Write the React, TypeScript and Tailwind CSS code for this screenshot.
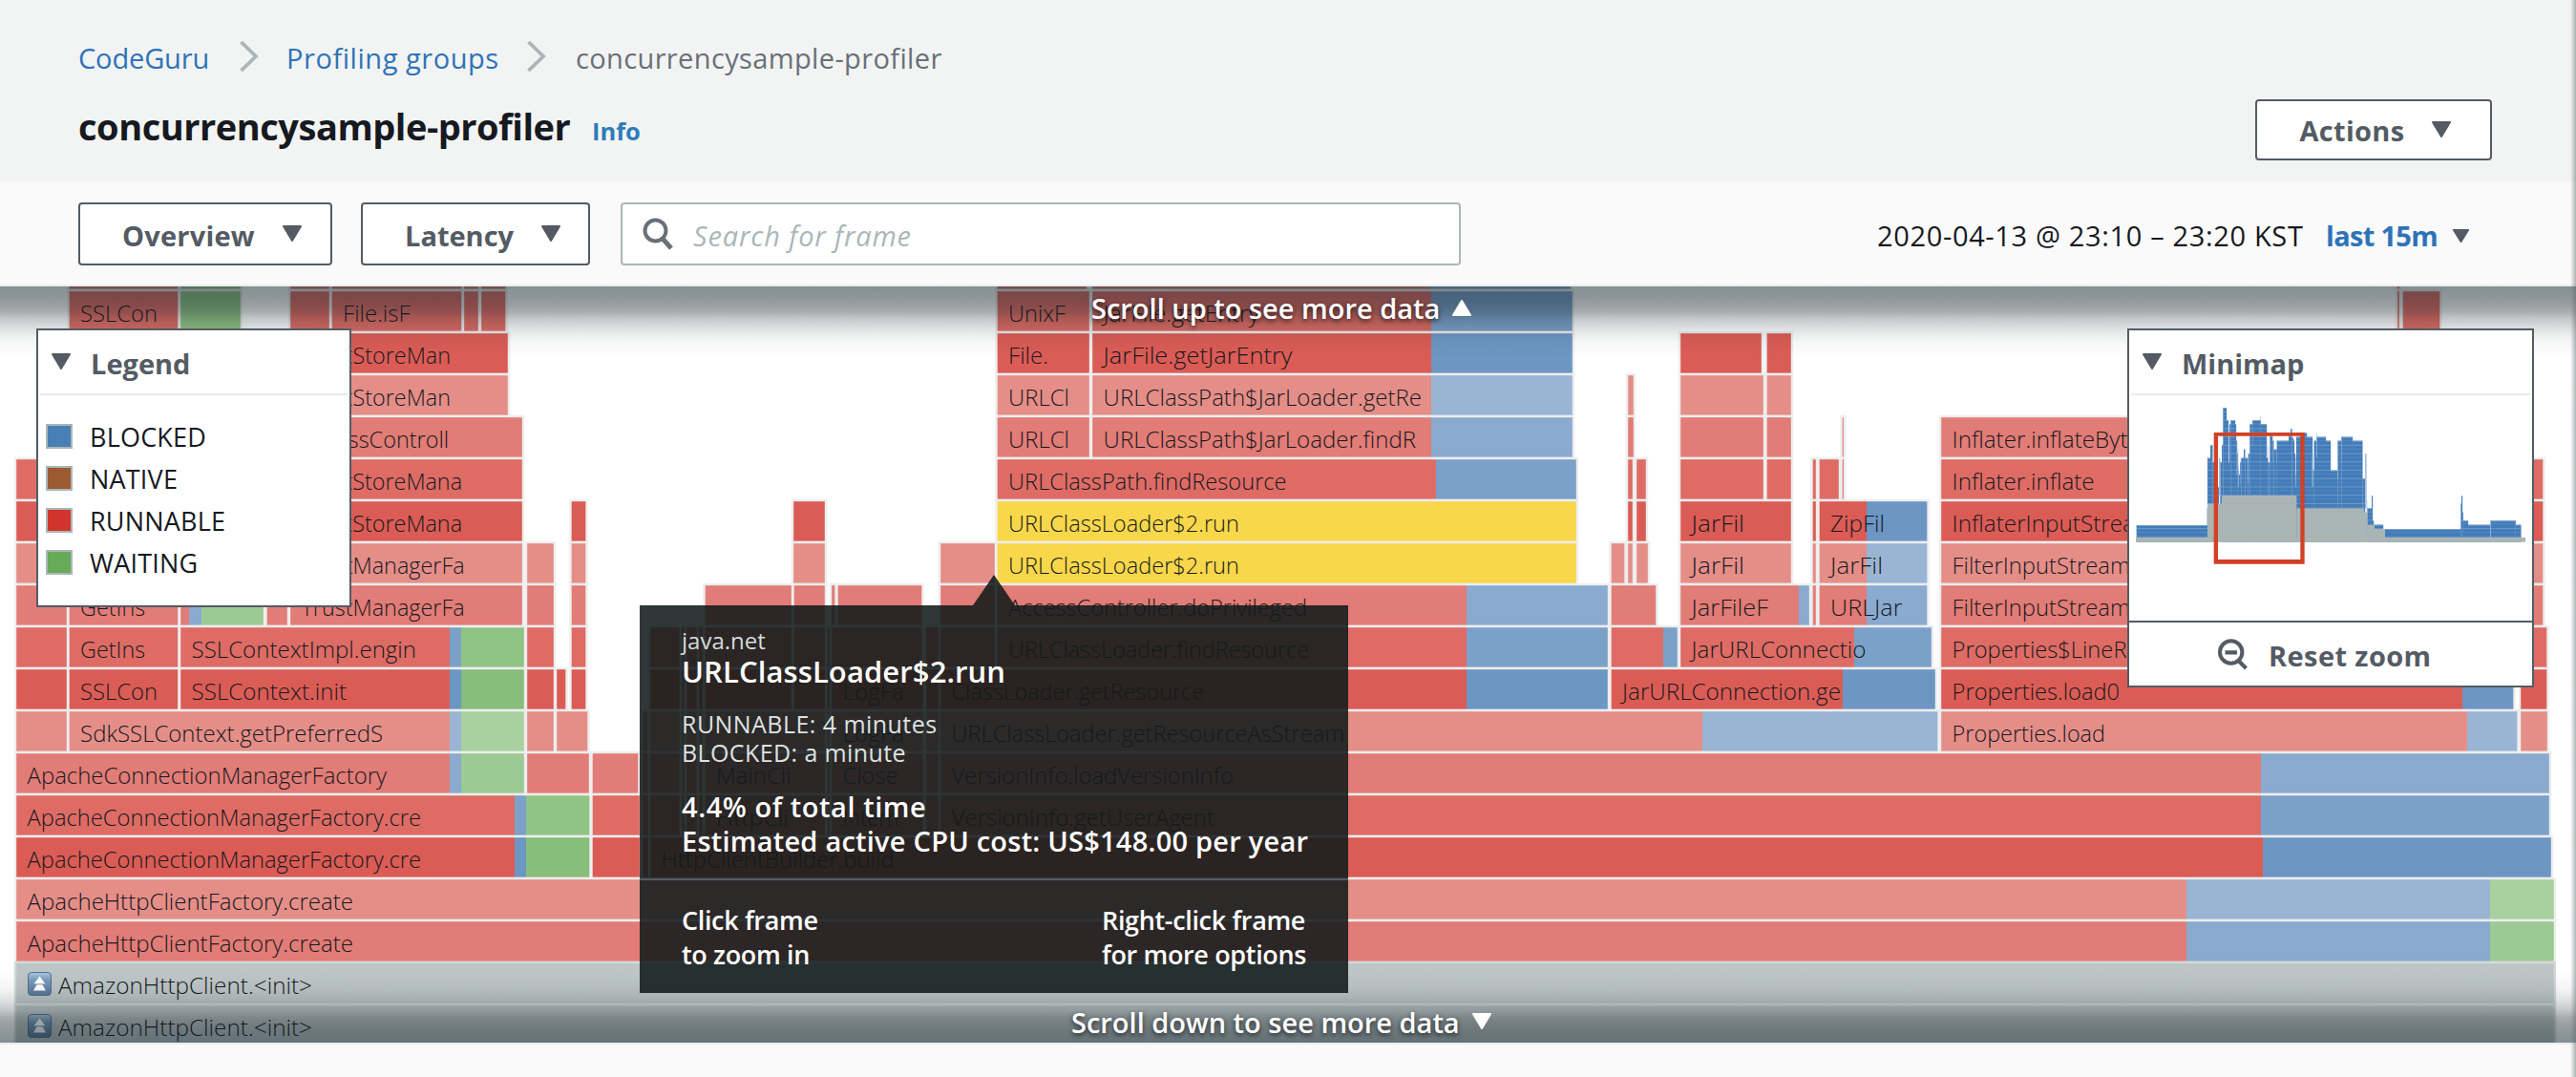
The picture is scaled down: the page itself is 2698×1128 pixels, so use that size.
import type { ReactNode } from 'react';

/* ---------- Flame graph data ---------- */

// Background tones repeat every four rows.
const RED = ['#db5c55', '#e58e88', '#e27c76', '#de6c65'];
const BLUE = ['#6c96c3', '#9ab5d4', '#8aaacf', '#7ba1c9'];
const GREEN = ['#87be7b', '#a9d19f', '#9cca93', '#90c485'];
const YELLOW = '#f9d74a';
const GRAY = '#bdc5c6';

type Frame = {
  x: number;
  end: number;
  label?: string;
  labelEnd?: number;
  blue?: number;
  green?: number;
  kind?: 'yellow' | 'gray';
};
type Row = { top: number; frames: Frame[] };

const f = (x: number, end: number, label?: string, labelEnd?: number, extra: Partial<Frame> = {}): Frame => ({
  x,
  end,
  label,
  labelEnd,
  ...extra,
});

const ROWS: Row[] = [
  {
    top: 260,
    frames: [
      f(71.5, 187.5), f(188, 253, undefined, undefined, { green: 188 }), f(303, 346), f(346.5, 484.5), f(485, 502), f(503, 530.5),
      f(1043.5, 1139), f(1143, 1646, undefined, undefined, { blue: 1497 }), f(2510, 2514),
    ],
  },
  {
    top: 304,
    frames: [
      f(71.5, 187.5, 'SSLCon', 165), f(188, 253, undefined, undefined, { green: 188 }), f(303, 346), f(346.5, 484.5, 'File.isF', 429.5),
      f(485, 502), f(503, 530.5),
      f(1043.5, 1142, 'UnixF', 1116), f(1143, 1648, 'JarFile.getEntry', 1319, { blue: 1499 }),
      f(2510, 2514), f(2515.5, 2556.5),
    ],
  },
  {
    top: 348,
    frames: [
      f(303, 533, 'TrustStoreMan', 472),
      f(1043.5, 1142, 'File.', 1098), f(1143, 1648, 'JarFile.getJarEntry', 1353.5, { blue: 1499 }),
      f(1759, 1846), f(1849.5, 1877),
    ],
  },
  {
    top: 392,
    frames: [
      f(303, 533, 'TrustStoreMan', 472),
      f(1043.5, 1142, 'URLCl', 1120), f(1143, 1648, 'URLClassPath$JarLoader.getRe', 1489, { blue: 1499 }),
      f(1704, 1712), f(1759, 1848), f(1849.5, 1877),
    ],
  },
  {
    top: 436,
    frames: [
      f(303, 548, 'AccessControll', 470),
      f(1043.5, 1142, 'URLCl', 1120), f(1143, 1648, 'URLClassPath$JarLoader.findR', 1483, { blue: 1499 }),
      f(1704, 1712), f(1759, 1848), f(1849.5, 1877), f(1928.5, 1932),
      f(2032, 2632, 'Inflater.inflateByt', 2228.5),
    ],
  },
  {
    top: 480,
    frames: [
      f(16, 71), f(303, 548, 'TrustStoreMana', 484),
      f(1043.5, 1652, 'URLClassPath.findResource', 1347.6, { blue: 1504 }),
      f(1704, 1711), f(1713, 1725), f(1759, 1848), f(1849.5, 1877), f(1897.5, 1903), f(1904.5, 1927), f(1928.5, 1932),
      f(2032, 2632, 'Inflater.inflate', 2193.6), f(2639, 2664.5),
    ],
  },
  {
    top: 524,
    frames: [
      f(16, 71), f(303, 548, 'TrustStoreMana', 484), f(597.5, 614.5), f(830, 865),
      f(1043.5, 1652, 'URLClassLoader$2.run', 1298, { kind: 'yellow' }),
      f(1704, 1711), f(1713, 1725), f(1759, 1877, 'JarFil', 1827), f(1897.5, 1903),
      f(1904.5, 2019.5, 'ZipFil', 1974, { blue: 1955 }),
      f(2032, 2632, 'InflaterInputStrea', 2236), f(2639, 2664.5),
    ],
  },
  {
    top: 568,
    frames: [
      f(16, 71), f(303, 548, 'TrustManagerFa', 486.6), f(551, 581), f(597.5, 614.5), f(830, 865), f(984, 1043),
      f(1043.5, 1652, 'URLClassLoader$2.run', 1298, { kind: 'yellow' }),
      f(1686.5, 1702.5), f(1704, 1711), f(1713, 1727), f(1759, 1877, 'JarFil', 1827), f(1897.5, 1903),
      f(1904.5, 2019.5, 'JarFil', 1972, { blue: 1955 }),
      f(2032, 2632, 'FilterInputStream', 2231), f(2639, 2664.5),
    ],
  },
  {
    top: 612,
    frames: [
      f(16, 71), f(71.5, 187.5, 'GetIns', 152), f(188, 277, undefined, undefined, { blue: 198, green: 211 }), f(278.5, 302),
      f(303, 548, 'TrustManagerFa', 486.6), f(551, 581), f(597.5, 614.5),
      f(737.5, 830), f(830.5, 865), f(870, 875.5), f(876.5, 966.5), f(984, 1043),
      f(1043.5, 1685, 'AccessController.doPrivileged', 1369, { blue: 1536 }),
      f(1686.5, 1735.5, undefined, undefined, { blue: 1734 }), f(1759, 1896, 'JarFileF', 1852, { blue: 1884 }), f(1897.5, 1903),
      f(1904.5, 2019.5, 'URLJar', 1992.5, { blue: 1955 }),
      f(2032, 2632, 'FilterInputStream', 2231), f(2639, 2664.5),
    ],
  },
  {
    top: 656,
    frames: [
      f(16, 71), f(71.5, 187.5, 'GetIns', 152), f(188, 550, 'SSLContextImpl.engin', 436, { blue: 471, green: 483 }),
      f(551, 581), f(597.5, 614.5),
      f(680, 713), f(713, 718), f(718, 731), f(731, 737), f(737.5, 830), f(830.5, 865), f(865.5, 870), f(870, 966.5),
      f(969, 984), f(984, 1043), f(1043.5, 1685, 'URLClassLoader.findResource', 1371, { blue: 1536 }),
      f(1686.5, 1758, undefined, undefined, { blue: 1742 }), f(1759, 2024, 'JarURLConnectio', 1954.5, { blue: 1942 }),
      f(2032, 2632, 'Properties$LineR', 2227.5), f(2639, 2668.5),
    ],
  },
  {
    top: 700,
    frames: [
      f(16, 71), f(71.5, 187.5, 'SSLCon', 165), f(188, 550, 'SSLContext.init', 363, { blue: 471, green: 483 }),
      f(551, 581), f(582, 593.5), f(597.5, 614.5),
      f(680, 713), f(713, 718), f(718, 731), f(731, 737), f(737.5, 830), f(830.5, 865), f(865.5, 870), f(870, 968, 'LogFa', 947),
      f(969, 984), f(984, 1685, 'ClassLoader.getResource', 1261, { blue: 1536 }),
      f(1686.5, 2028, 'JarURLConnection.ge', 1928, { blue: 1930 }),
      f(2032, 2633.5, 'Properties.load0', 2220, { blue: 2579 }), f(2639, 2668.5),
    ],
  },
  {
    top: 744,
    frames: [
      f(16, 71), f(71.5, 550, 'SdkSSLContext.getPreferredS', 401, { blue: 471, green: 483 }), f(551, 581), f(582, 616.5),
      f(672, 680), f(680, 713), f(713, 718), f(718, 731), f(731, 737), f(737.5, 865), f(865.5, 870), f(870, 968, 'LogFa', 947),
      f(969, 984), f(984, 2030.5, 'URLClassLoader.getResourceAsStream', 1408, { blue: 1783 }),
      f(2032, 2637.5, 'Properties.load', 2205, { blue: 2584 }), f(2639, 2669),
    ],
  },
  {
    top: 788,
    frames: [
      f(16, 550, 'ApacheConnectionManagerFactory', 405, { blue: 471, green: 483 }), f(551, 618), f(619.5, 669.5),
      f(672, 680), f(680, 713), f(713, 718), f(718, 731), f(731, 737), f(737.5, 865, 'MainCli', 828.6), f(865.5, 870),
      f(870, 968, 'Close', 940.5), f(969, 984), f(984, 2671, 'VersionInfo.loadVersionInfo', 1292, { blue: 2368 }),
    ],
  },
  {
    top: 832,
    frames: [
      f(16, 618.5, 'ApacheConnectionManagerFactory.cre', 441, { blue: 539, green: 551 }), f(619.5, 671),
      f(672, 680), f(680, 713), f(713, 718), f(718, 731), f(731, 737), f(737.5, 865, 'HttpCli', 826), f(865.5, 870),
      f(870, 968, 'Intern', 941.5), f(969, 984), f(984, 2671, 'VersionInfo.getUserAgent', 1272, { blue: 2368 }),
    ],
  },
  {
    top: 876,
    frames: [
      f(16, 618.5, 'ApacheConnectionManagerFactory.cre', 441, { blue: 539, green: 551 }), f(619.5, 671), f(672, 680),
      f(680, 2673, 'HttpClientBuilder.build', 936.6, { blue: 2370 }),
    ],
  },
  { top: 920, frames: [f(16, 2676, 'ApacheHttpClientFactory.create', 370, { blue: 2290, green: 2608 })] },
  { top: 964, frames: [f(16, 2676, 'ApacheHttpClientFactory.create', 370, { blue: 2290, green: 2608 })] },
  { top: 1008, frames: [f(16, 2676, 'AmazonHttpClient.<init>', 327, { kind: 'gray' })] },
  { top: 1052, frames: [f(16, 2676, 'AmazonHttpClient.<init>', 327, { kind: 'gray' })] },
];

function FrameShape({ frame, top }: { frame: Frame; top: number }) {
  const tone = (((top - 348) / 44) % 4 + 4) % 4;
  const base = frame.kind === 'yellow' ? YELLOW : frame.kind === 'gray' ? GRAY : RED[tone];
  const isGray = frame.kind === 'gray';
  const labelX = frame.x + (isGray ? 45 : 12.6);
  return (
    <g>
      <rect x={frame.x} y={top} width={frame.end - frame.x} height={44} fill={base} />
      {frame.blue !== undefined && (
        <rect x={frame.blue} y={top} width={frame.end - frame.blue} height={44} fill={BLUE[tone]} />
      )}
      {frame.green !== undefined && (
        <rect x={frame.green} y={top} width={frame.end - frame.green} height={44} fill={GREEN[tone]} />
      )}
      <rect
        x={frame.x}
        y={top}
        width={frame.end - frame.x}
        height={44}
        fill="none"
        stroke={isGray ? '#d3dada' : '#eeeeee'}
        strokeWidth={2.4}
      />
      {isGray && <UpBadge x={29} y={top + 10} />}
      {frame.label && (
        <text
          x={labelX}
          y={top + 33}
          textLength={(frame.labelEnd ?? frame.end) - labelX}
          lengthAdjust="spacingAndGlyphs"
          fontSize={24.5}
          fill="#16191f"
        >
          {frame.label}
        </text>
      )}
    </g>
  );
}

function UpBadge({ x, y }: { x: number; y: number }) {
  return (
    <g transform={`translate(${x} ${y})`}>
      <rect x={0.5} y={0.5} width={24} height={24} rx={3.5} fill="url(#badge)" stroke="#55718f" />
      <path d="M12.500 4.500 18.500 12.500H15L19 19.500H6L10 12.500H6.500Z" fill="#ffffff" />
      <path d="M8.500 12.800H16.500" stroke="#7d9dbd" strokeWidth={1} />
    </g>
  );
}

function FlameGraph() {
  return (
    <svg
      className="block h-[792px] w-[2698px] font-light"
      viewBox="0 300 2698 792"
      fontFamily='"Open Sans", "Noto Sans", sans-serif'
    >
      <defs>
        <linearGradient id="badge" x1="0" y1="0" x2="0" y2="1">
          <stop offset="0" stopColor="#a9c6e0" />
          <stop offset="0.35" stopColor="#7799bb" />
          <stop offset="1" stopColor="#56779b" />
        </linearGradient>
      </defs>
      {ROWS.map((row) => row.frames.map((frame, i) => <FrameShape key={`${row.top}-${i}`} frame={frame} top={row.top} />))}
    </svg>
  );
}

/* ---------- Minimap ---------- */

// [left, right, top]
const MINI_BLUE: [number, number, number][] = [
  [53, 276, 420], [276, 285, 209], [285, 292, 169], [292, 297, 222], [297, 312, 300], [316, 321, 222], [321, 325, 169],
  [325, 336, 51], [336, 342, 90], [345, 349, 103], [342, 345, 222], [349, 363, 90], [363, 366, 103], [366, 369, 155],
  [369, 371, 195], [371, 375, 248], [375, 378, 261], [378, 382, 222], [382, 390, 209], [390, 394, 182], [394, 403, 209],
  [403, 405, 222], [405, 409, 195], [409, 417, 103], [417, 443, 90], [443, 462, 103], [462, 466, 209], [466, 472, 222],
  [472, 480, 130], [480, 484, 155], [484, 494, 182], [494, 531, 155], [531, 537, 130], [537, 541, 117], [541, 546, 145],
  [546, 549, 155], [549, 552, 195], [552, 555, 261], [555, 567, 143], [567, 588, 130], [588, 606, 143], [606, 611, 248],
  [611, 618, 155], [618, 621, 143], [621, 648, 143], [648, 663, 155], [663, 685, 248], [685, 697, 155], [697, 732, 143],
  [732, 763, 155], [763, 771, 274], [778, 792, 367], [792, 795, 327], [795, 798, 405], [798, 828, 419], [828, 1072, 432],
  [1072, 1074, 352], [1074, 1077, 327], [1077, 1079, 380], [1079, 1095, 406], [1095, 1165, 419], [1165, 1244, 406],
  [1244, 1261, 419],
];
const MINI_LIGHT: [number, number, number, number][] = [
  [312, 316, 209, 327], [442, 444, 78, 92], [371, 373, 182, 262], [771, 776, 195, 367], [776, 778, 340, 380],
  [342, 344, 143, 222], [366, 367, 155, 262], [373, 375, 235, 300], [403, 405, 195, 288], [417, 418, 90, 170], [465, 467, 169, 222],
  [471, 472, 143, 235], [481, 482, 143, 222], [494, 495, 155, 222], [552, 554, 209, 300], [605, 608, 195, 300], [618, 620, 130, 209],
  [685, 687, 155, 275], [697, 698, 155, 222], [378, 379, 209, 290], [1164, 1166, 406, 458], [274, 276, 366, 419],
];
const MINI_GRAY: [number, number, number][] = [
  [276, 321, 353], [321, 556, 327], [556, 768, 367], [768, 778, 380], [778, 801, 419], [801, 834, 432], [51, 1275, 459],
];

function MinimapChart() {
  return (
    <svg className="block h-[236px] w-[422px]" viewBox="30 12 1266 708">
      <defs>
        <pattern id="mini-lines" x="0" y="51" width="1266" height="26.200" patternUnits="userSpaceOnUse">
          <rect x="0" y="12" width="1400" height="2.500" fill="#8db0d3" fillOpacity="0.700" />
          <rect x="0" y="24" width="1400" height="2" fill="#8db0d3" fillOpacity="0.300" />
        </pattern>
      </defs>
      {MINI_BLUE.map(([l, r, t]) => (
        <g key={l}>
          <rect x={l} y={t} width={r - l + 0.5} height={473 - t} fill="#437cb9" />
          <rect x={l} y={t} width={r - l} height={2.5} fill="#7fa6cf" />
          <rect x={l} y={t} width={r - l + 0.5} height={460 - t} fill="url(#mini-lines)" />
        </g>
      ))}
      {MINI_LIGHT.map(([l, r, t, b], i) => (
        <rect key={i} x={l} y={t} width={r - l} height={b - t} fill="#a3bfdb" />
      ))}
      {MINI_GRAY.map(([l, r, t]) => (
        <g key={l}>
          <rect x={l} y={t} width={r - l} height={473 - t} fill="#aab5b4" />
          <rect x={l} y={t} width={r - l} height={460 - t} fill="url(#mini-lines)" opacity={0.35} />
        </g>
      ))}
      <path d="M296 129H581V542H296ZM309 140V528H568V140Z" fillRule="evenodd" fill="#d14126" />
    </svg>
  );
}

/* ---------- Small shared pieces ---------- */

function Caret({ className, up = false }: { className: string; up?: boolean }) {
  return (
    <svg viewBox="0 0 22 18" preserveAspectRatio="none" className={className}>
      <path
        d={up ? 'M2 17H20L11 2Z' : 'M2 1H20L11 16Z'}
        fill="currentColor"
        stroke="currentColor"
        strokeWidth={2}
        strokeLinejoin="round"
      />
    </svg>
  );
}

function Chevron() {
  return (
    <svg viewBox="0 0 20 32" className="h-8 w-5 shrink-0" fill="none" stroke="#aab7b8" strokeWidth={3.8}>
      <path d="M1.500 1 17 16 1.500 31" />
    </svg>
  );
}

function PanelHeader({ children }: { children: ReactNode }) {
  return (
    <div className="mx-[2px] flex h-[68px] items-center border-b-2 border-[#eaeded] pl-[11px] text-[#545b64]">
      <Caret className="h-[18px] w-[22px]" />
      <span className="mt-[2px] ml-[20px] text-[29px] leading-none font-bold">{children}</span>
    </div>
  );
}

function LegendItem({ swatch, children }: { swatch: string; children: ReactNode }) {
  return (
    <li className="flex h-11 items-center">
      <span className={`h-[26px] w-7 border-2 border-[#aab7b8] ${swatch}`} />
      <span className="ml-[18px] text-[27px] leading-none tracking-[0.2px] text-[#16191f]">{children}</span>
    </li>
  );
}

/* ---------- Page sections ---------- */

function Header() {
  return (
    <header className="h-[190px] bg-[#f2f4f3] pt-[41px] pr-[88px] pl-[82px]">
      <nav className="flex h-10 items-center text-[29px] leading-10">
        <a className="w-[138px] tracking-[-0.15px] whitespace-nowrap text-[#2e73b8]">CodeGuru</a>
        <span className="ml-[31px] flex -translate-y-[2px]"><Chevron /></span>
        <a className="ml-[29px] w-[223px] tracking-[0.550px] whitespace-nowrap text-[#2e73b8]">Profiling groups</a>
        <span className="ml-[29px] flex -translate-y-[2px]"><Chevron /></span>
        <span className="ml-[31px] tracking-[0.370px] whitespace-nowrap text-[#687078]">concurrencysample-profiler</span>
      </nav>
      <div className="mt-[23px] flex h-16 items-start justify-between">
        <div className="flex h-16 items-baseline">
          <h1 className="w-[516px] text-[38px] leading-[56px] font-bold tracking-[-0.470px] whitespace-nowrap text-[#16191f]">
            concurrencysample-profiler
          </h1>
          <a className="ml-[22px] text-[25.500px] font-bold text-[#2e7cb8]">Info</a>
        </div>
        <button className="flex h-16 w-[248px] items-center rounded border-2 border-[#545b64] bg-white pl-[43px] text-[29px] font-bold text-[#545b64]">
          <span className="w-[113px] leading-none tracking-[0.300px] whitespace-nowrap">Actions</span>
          <Caret className="ml-[26px] h-[18px] w-[22px]" />
        </button>
      </div>
    </header>
  );
}

function Toolbar() {
  return (
    <div className="flex h-[110px] items-start border-b-2 border-[#eaeded] bg-[#fafafa] pt-[22px] pl-[82px]">
      <button className="flex h-[66px] w-[266px] items-center rounded border-2 border-[#545b64] bg-white pl-[44px] text-[29px] font-bold text-[#545b64]">
        <span className="mt-[2px] w-[136px] leading-none tracking-[0.200px] whitespace-nowrap">Overview</span>
        <Caret className="ml-[31px] h-[18px] w-[22px]" />
      </button>
      <button className="ml-[30px] flex h-[66px] w-[240px] items-center rounded border-2 border-[#545b64] bg-white pl-[44px] text-[29px] font-bold text-[#545b64]">
        <span className="mt-[2px] w-[112px] leading-none whitespace-nowrap">Latency</span>
        <Caret className="ml-[30px] h-[18px] w-[22px]" />
      </button>
      <div className="ml-[32px] flex h-[66px] w-[880px] items-center rounded border-2 border-[#aab7b8] bg-white pl-[21px]">
        <svg viewBox="0 0 32 34" className="h-[34px] w-8" fill="none" stroke="#687078" strokeWidth={4}>
          <circle cx="13.500" cy="13.500" r="11" />
          <path d="M21 22 30 32" strokeWidth={5} />
        </svg>
        <span className="mt-[2px] ml-[21px] text-[29px] leading-none tracking-[0.850px] text-[#aab7b8] italic">Search for frame</span>
      </div>
      <div className="ml-[436px] flex h-[66px] items-center text-[29px] leading-none">
        <span className="mt-[2px] w-[446px] tracking-[0.650px] whitespace-nowrap text-[#16191f]">
          2020-04-13 @ 23:10 – 23:20 KST
        </span>
        <span className="mt-[2px] ml-[24px] w-[117px] font-bold tracking-[-0.700px] whitespace-nowrap text-[#2e73b8]">
          last 15m
        </span>
        <Caret className="mt-[5px] ml-[15px] h-[15px] w-[19px] text-[#545b64]" />
      </div>
    </div>
  );
}

function Legend() {
  return (
    <section className="absolute top-[44px] left-[38px] h-[292px] w-[330px] border-2 border-[#545b64] bg-white">
      <PanelHeader>Legend</PanelHeader>
      <ul className="pt-[21px] pl-2">
        <LegendItem swatch="bg-[#4880b5]">BLOCKED</LegendItem>
        <LegendItem swatch="bg-[#9c5a33]">NATIVE</LegendItem>
        <LegendItem swatch="bg-[#d0342c]">RUNNABLE</LegendItem>
        <LegendItem swatch="bg-[#67aa57]">WAITING</LegendItem>
      </ul>
    </section>
  );
}

function Minimap() {
  return (
    <section className="absolute top-[44px] left-[2228px] h-[376px] w-[426px] border-2 border-[#545b64] bg-white">
      <PanelHeader>Minimap</PanelHeader>
      <MinimapChart />
      <button className="flex h-[68px] w-full items-center border-t-2 border-[#545b64] pl-[93px] text-[#545b64]">
        <svg viewBox="0 0 31 33" className="h-[33px] w-[31px]" fill="none" stroke="currentColor" strokeWidth={4}>
          <circle cx="13.700" cy="14" r="11.700" />
          <path d="M7.500 14.300H20M22 23.500 29.500 31" strokeWidth={4.2} />
        </svg>
        <span className="mt-[2px] ml-[22px] text-[29px] leading-none font-bold tracking-[0.400px] whitespace-nowrap">Reset zoom</span>
      </button>
    </section>
  );
}

function Tooltip() {
  return (
    <div className="absolute top-[302px] left-[670px] w-[742px]">
      <svg viewBox="0 0 44 32" className="ml-[349px] block h-8 w-11">
        <path d="M0 32 22 0 44 32Z" fill="#121b1b" fillOpacity="0.880" />
      </svg>
      <div className="h-[406px] bg-[#121b1b]/88 whitespace-nowrap text-white">
        <div className="h-[288px] border-b-2 border-[#545b64] pt-[22px] pl-[44px]">
          <p className="h-[30px] text-[24px] leading-[30px] text-[#d5dbdb]">java.net</p>
          <p className="h-[36px] text-[31px] leading-[35px] font-semibold tracking-[0.100px]">URLClassLoader$2.run</p>
          <p className="mt-[21px] h-[30px] text-[25px] leading-[30px] tracking-[0.450px] text-[#dde2e2]">RUNNABLE: 4 minutes</p>
          <p className="h-[30px] text-[25px] leading-[30px] tracking-[0.400px] text-[#dde2e2]">BLOCKED: a minute</p>
          <p className="mt-[24px] h-[36px] text-[29px] leading-[36px] font-semibold tracking-[0.550px]">4.4% of total time</p>
          <p className="h-[36px] text-[29px] leading-[36px] font-semibold tracking-[0.230px]">
            Estimated active CPU cost: US$148.00 per year
          </p>
        </div>
        <div className="flex justify-between pt-[24px] pr-[43px] pl-[44px] text-[27px] leading-9 font-semibold tracking-[-0.350px]">
          <p>Click frame<br />to zoom in</p>
          <p className="w-[215px]">Right-click frame<br />for more options</p>
        </div>
      </div>
    </div>
  );
}

function Profile() {
  return (
    <main className="relative h-[794px] overflow-hidden border-b-2 border-[#eaeded] bg-white">
      <FlameGraph />
      <div className="absolute inset-x-0 top-0 h-[74px] bg-[linear-gradient(to_bottom,rgba(11,33,39,0.5)_0px,rgba(16,30,39,0.47)_10px,rgba(16,30,35,0.42)_20px,rgba(16,30,35,0.36)_27px,rgba(16,30,35,0.26)_33px,rgba(16,30,35,0.18)_40px,rgba(16,30,35,0.11)_47px,rgba(16,30,35,0.045)_57px,rgba(16,30,35,0)_74px)]" />
      <div className="absolute inset-x-0 top-[718px] h-[74px] bg-[linear-gradient(to_top,rgba(11,33,39,0.5)_0px,rgba(16,30,39,0.47)_10px,rgba(16,30,35,0.42)_20px,rgba(16,30,35,0.36)_27px,rgba(16,30,35,0.26)_33px,rgba(16,30,35,0.18)_40px,rgba(16,30,35,0.11)_47px,rgba(16,30,35,0.045)_57px,rgba(16,30,35,0)_74px)]" />
      <div className="absolute top-[2px] left-[1143px] flex h-10 items-center text-[29px] leading-none font-semibold text-white [text-shadow:0_2px_5px_rgba(0,0,0,0.7)]">
        <span className="w-[366px] whitespace-nowrap">Scroll up to see more data</span>
        <Caret up className="ml-[11px] h-[18px] w-[22px]" />
      </div>
      <div className="absolute top-[750px] left-[1122px] flex h-10 items-center text-[29px] leading-none font-semibold text-white [text-shadow:0_2px_5px_rgba(0,0,0,0.7)]">
        <span className="w-[408px] whitespace-nowrap">Scroll down to see more data</span>
        <Caret className="ml-[11px] h-[18px] w-[22px]" />
      </div>
      <Legend />
      <Minimap />
      <Tooltip />
    </main>
  );
}

export default function App() {
  return (
    <div className='relative h-[1128px] w-[2698px] overflow-hidden bg-[#fafafa] font-["Open_Sans","Noto_Sans",sans-serif]'>
      <Header />
      <Toolbar />
      <Profile />
      <div className="absolute inset-y-0 right-0 w-[6px] bg-gradient-to-r from-transparent to-[#5f6b70]/50" />
    </div>
  );
}
